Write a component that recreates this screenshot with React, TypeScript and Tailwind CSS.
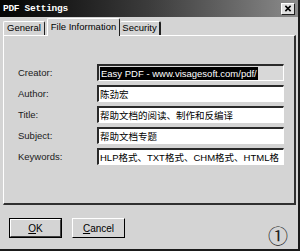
import React from 'react'

// PDF Settings dialog, classic Win9x look (grayscale)
const FIELDS: { label: string; value: string; selected?: boolean }[] = [
  { label: 'Creator:', value: 'Easy PDF - www.visagesoft.com/pdf/', selected: true },
  { label: 'Author:', value: '陈劲宏' },
  { label: 'Title:', value: '帮助文档的阅读、制作和反编译' },
  { label: 'Subject:', value: '帮助文档专题' },
  { label: 'Keywords:', value: 'HLP格式、TXT格式、CHM格式、HTML格' },
]

const sans = "font-['Liberation_Sans','Noto_Sans_CJK_SC',sans-serif]"

export default function App() {
  return (
    <div className={`w-[300px] h-[251px] bg-[#d4d4d4] border-r-2 border-b-2 border-[#1a1a1a] flex flex-col overflow-hidden ${sans}`}>
      {/* title bar */}
      <div className="h-[17px] shrink-0 flex items-center justify-between pl-[3px] pr-[3px] bg-gradient-to-r from-[#050505] via-[#3c3c3c] to-[#8c8c8c]">
        <span className="text-white font-bold text-[9.5px] leading-none font-['Liberation_Mono',monospace] tracking-[-0.3px]">
          PDF Settings
        </span>
        <div className="w-[14px] h-[12px] bg-[#e0e0e0] border-t border-l border-white border-r border-b border-r-[#202020] border-b-[#202020] flex items-center justify-center">
          <svg viewBox="0 0 8 8" width="8" height="7">
            <path d="M1 1L7 7M7 1L1 7" stroke="#000" strokeWidth="1.8" />
          </svg>
        </div>
      </div>

      {/* tabs */}
      <div className="h-[18px] shrink-0 flex items-end pl-[3px] relative z-10">
        <div className="h-[14px] w-[42px] flex items-center justify-center text-[9.5px] text-black border-t border-l border-white border-r border-r-[#202020] rounded-t-[2px]">
          General
        </div>
        <div className="h-[18px] w-[73px] -mb-px ml-[2px] bg-[#d4d4d4] flex items-center justify-center text-[9.5px] text-black border-t border-l border-white border-r border-r-[#202020] rounded-t-[2px]">
          File Information
        </div>
        <div className="h-[14px] w-[41px] flex items-center justify-center text-[9.5px] text-black border-t border-white border-r-2 border-r-[#202020] rounded-t-[2px]">
          Security
        </div>
      </div>

      {/* panel */}
      <div className="h-[170px] shrink-0 ml-[3px] mr-[2px] border-t border-l border-white border-r-2 border-b-2 border-r-[#303030] border-b-[#303030] pt-[28px] pl-[14px] flex flex-col gap-[4px]">
        {FIELDS.map((f) => (
          <div key={f.label} className="flex items-center h-[17px]">
            <span className="w-[79px] text-[9.5px] text-[#202020] pt-[2px]">{f.label}</span>
            <div
              className={`w-[187px] h-[17px] border-t-2 border-l-2 border-[#2a2a2a] border-r border-b border-r-white border-b-white flex items-center pl-[1px] overflow-hidden whitespace-nowrap ${
                f.selected ? 'bg-[#d8d8d8]' : 'bg-white'
              }`}
            >
              {f.selected ? (
                <span className="bg-black text-white text-[9.5px] leading-[13px] px-[1px]">{f.value}</span>
              ) : (
                <span className="text-black text-[9.5px] leading-[13px]">{f.value}</span>
              )}
            </div>
          </div>
        ))}
      </div>

      {/* buttons */}
      <div className="flex-1 flex items-start pt-[13px] pl-[9px] pr-[10px]">
        <button className="w-[53px] h-[20px] border border-black flex">
          <span className="flex-1 flex items-center justify-center border-t border-l border-white border-r border-b border-r-[#404040] border-b-[#404040] text-[10px] text-black">
            <span className="underline">O</span>K
          </span>
        </button>
        <button className="ml-[10px] w-[53px] h-[20px] flex items-center justify-center border-t border-l border-white border-r border-b border-r-black border-b-black text-[10px] text-black">
          <span className="underline">C</span>ancel
        </button>
        <span className="ml-auto mt-[9px] text-[20px] leading-none text-[#222] font-['Liberation_Serif','Noto_Sans_CJK_SC',serif]">①</span>
      </div>
    </div>
  )
}
